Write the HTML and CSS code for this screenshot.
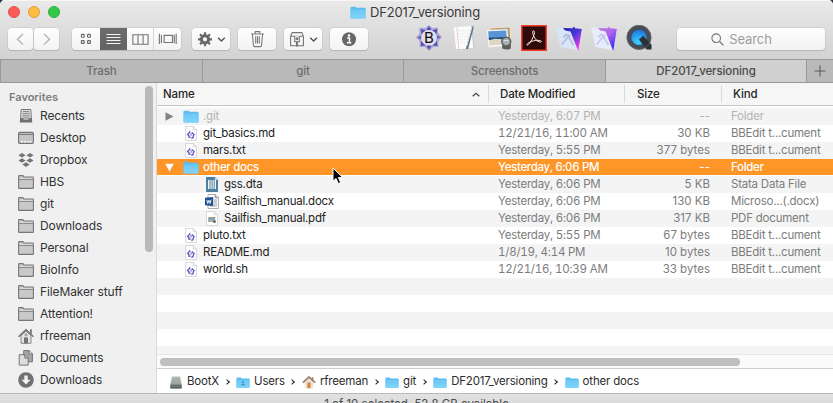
FILE: index.html
```html
<!DOCTYPE html>
<html lang="en">
<head>
<meta charset="utf-8">
<title>DF2017_versioning</title>
<link rel="stylesheet" href="styles.css">
</head>
<body>
<svg class="defs" aria-hidden="true">
  <defs>
    <linearGradient id="fold" x1="0" y1="0" x2="0" y2="1"><stop offset="0" stop-color="#6cc8f4"/><stop offset="1" stop-color="#7fd3fa"/></linearGradient>
    <linearGradient id="fm" x1="0" y1="0" x2=".7" y2="1"><stop offset="0" stop-color="#1b1f9c"/><stop offset=".5" stop-color="#4a38d8"/><stop offset="1" stop-color="#ff35f0"/></linearGradient>
    <linearGradient id="fm2" x1="0" y1="0" x2=".6" y2="1"><stop offset="0" stop-color="#c583dc"/><stop offset=".5" stop-color="#ad60ef"/><stop offset="1" stop-color="#3926ff"/></linearGradient>
    <radialGradient id="qt" cx=".45" cy=".75" r=".75"><stop offset="0" stop-color="#3fd0ff"/><stop offset="1" stop-color="#1364d8"/></radialGradient>
    <linearGradient id="drv" x1="0" y1="0" x2="0" y2="1"><stop offset="0" stop-color="#b5bbb9"/><stop offset="1" stop-color="#8b9391"/></linearGradient>
    <symbol id="folder" viewBox="0 0 16 13"><path d="M.5 1.6Q.5.7 1.4.7h4.1l1.1 1.1h8q.9 0 .9.9v8.8q0 .9-.9.9H1.4q-.9 0-.9-.9z" fill="#5bbdf0"/><path d="M.5 3.5h15v8q0 .9-.9.9H1.4q-.9 0-.9-.9z" fill="url(#fold)"/></symbol>
    <symbol id="users" viewBox="0 0 16 13"><use href="#folder"/><circle cx="8" cy="6.2" r="1.3" fill="#3d9cd0"/><path d="M5.3 10q.4-2 2.7-2t2.7 2z" fill="#3d9cd0"/></symbol>
    <symbol id="sfolder" viewBox="0 0 16 14"><path d="M.6 12.7V1.5q0-.9.9-.9h3.1q.6 0 .9.8l.3.7h8.8q.8 0 .8.8v9.8q0 .7-.7.7H1.3q-.7 0-.7-.7z" fill="#c9c9c9" stroke="#767676" stroke-width="1.1"/><path d="M1 4.5h14" stroke="#858585" stroke-width=".9"/><path d="M1.2 3.2h13.6" stroke="#e2e2e2" stroke-width=".8"/></symbol>
    <symbol id="bbfile" viewBox="0 0 12 15"><path d="M.5.5h7.8l3.2 3.2v10.8H.5z" fill="#fdfdff" stroke="#cfcfd6" stroke-width=".8"/><path d="M8.3.5v3.2h3.2" fill="#eee" stroke="#c8c8d0" stroke-width=".6"/><path d="M5 5.2 4 6.9 2.6 8.4l1.2 1 .3 1.9 1.5-.2m1.2-4.6 1 1.1 1.3.9-.8 1.5-.3 1.7-1.7.6" fill="none" stroke="#5a50bb" stroke-width="1.25"/><path d="M5.3 7v3M5 7h1.3L7 7.8l-1 .6 1 .7-.7 1" fill="none" stroke="#8d88c8" stroke-width=".6"/></symbol>
    <symbol id="dta" viewBox="0 0 12 15"><path d="M0 0h9l3 3v12H0z" fill="#4e7ea0"/><path d="M8.8 0v3.1H12z" fill="#bdd4e3"/><path d="M2 3h8v9H2z" fill="#eaf3f7"/><path d="M4 3v9M6.1 3v9M8.2 3v9" stroke="#4d7897" stroke-width=".9"/></symbol>
    <symbol id="docx" viewBox="0 0 14 15"><path d="M3 .5h7.4l3 3v11H3z" fill="#fff" stroke="#999" stroke-width=".8"/><path d="M10.2.5v3.2h3.2" fill="#ddd" stroke="#777" stroke-width=".8"/><path d="M9 6h3M9 8h3M9 10h3M5 12h7" stroke="#777" stroke-width=".7"/><path d="M0 3.8 8.2 3v9L0 11.2z" fill="#204f91"/><path d="m1.8 5.8.9 3.7 1.2-3.3 1.2 3.3 1-3.8" fill="none" stroke="#fff" stroke-width=".9"/></symbol>
    <symbol id="pdf" viewBox="0 0 12 15"><path d="M.5.5h7.8l3.2 3.2v10.8H.5z" fill="#fff" stroke="#cfcfcf" stroke-width=".8"/><path d="M8.3.5v3.2h3.2" fill="#eee" stroke="#ccc" stroke-width=".6"/><path d="M2.2 6h6.9v4.7H2.2z" fill="#7aa3cc"/><path d="M2.2 8.8h6.9v2.2H2.2z" fill="#b4aa95"/><path d="M3 6h6.5v1H3z" fill="#b79561"/><circle cx="8.5" cy="10.7" r="1.4" fill="#576273"/></symbol>
    <symbol id="drive" viewBox="0 0 14 14"><path d="M2.6.6h8.8L13 9v4.4H1V9z" fill="url(#drv)"/><path d="M1 9.4h12v4H1z" fill="#58605e"/><path d="M2 11h10" stroke="#82918b" stroke-width="1"/><path d="M4 3q3-1 6 0v2.5H4z" fill="#a5adaa"/></symbol>
    <symbol id="homec" viewBox="0 0 14 14"><path d="M2.5 6v7.2h9V6L7 2z" fill="#e7e3dc"/><path d="M5.3 7h3.3v6.2H5.3z" fill="#dc8432"/><path d="M.4 7.2 7 1l6.6 6.2" fill="none" stroke="#9b7c61" stroke-width="1.7"/><path d="M10 1.4h1.6v3H10z" fill="#98765c"/></symbol>
  </defs>
</svg>

<div class="window">
  <header class="titlebar">
    <div class="title-row">
      <div class="lights"><i class="red"></i><i class="yellow"></i><i class="green"></i></div>
      <div class="title"><svg class="t-icon"><use href="#folder"/></svg><span>DF2017_versioning</span></div>
    </div>
    <div class="toolbar">
      <div class="nav">
        <button class="btn"><svg width="25" height="22" viewBox="0 0 25 22"><path d="M15 6l-5.5 5.2L15 16.6" class="chev-nav"/></svg></button>
        <button class="btn"><svg width="25" height="22" viewBox="0 0 25 22"><path d="M10 6l5.5 5.2L10 16.6" class="chev-nav"/></svg></button>
      </div>
      <div class="views btn">
        <span class="seg"><svg width="12" height="12" viewBox="0 0 12 12"><g fill="none" stroke="#686868" stroke-width="1.1"><rect x="1.4" y="1.4" width="2.8" height="2.8" rx=".5"/><rect x="7.6" y="1.4" width="2.8" height="2.8" rx=".5"/><rect x="1.4" y="7.6" width="2.8" height="2.8" rx=".5"/><rect x="7.6" y="7.6" width="2.8" height="2.8" rx=".5"/></g></svg></span>
        <span class="seg on"><svg width="15" height="12" viewBox="0 0 15 12"><path d="M.5 1.5h14M.5 4.5h14M.5 7.5h14M.5 10.5h14" stroke="#f2f2f2" stroke-width="1"/></svg></span>
        <span class="seg"><svg width="17" height="11" viewBox="0 0 17 11"><path d="M.9.8h15.2v9.4H.9zM6 .8v9.4M11.1.8v9.4" fill="none" stroke="#747474" stroke-width="1.1"/></svg></span>
        <span class="seg last"><svg width="20" height="12" viewBox="0 0 20 12"><path d="M5.7 2.4h8.4v7.1H5.7zM1 .8v10.3M17.8.8v10.3M3 1.7v8.5M15.9 1.7v8.5" transform="translate(.4 0)" fill="none" stroke="#747474" stroke-width="1.1"/></svg></span>
      </div>
      <div class="actions">
        <button class="btn wide"><svg width="38" height="22" viewBox="0 0 38 22"><circle cx="13" cy="11.3" r="3.6" fill="none" stroke="#686868" stroke-width="3"/><g stroke="#686868" stroke-width="2.2"><path d="M13 4.3v3M13 15.3v3M6 11.3h3M17 11.3h3M8 6.3l2.2 2.2M15.8 14.1l2.2 2.2M8 16.3l2.2-2.2M15.8 8.5 18 6.3"/></g><path d="m26 9.8 3.4 3.2 3.4-3.2" class="chev"/></svg></button>
        <button class="btn wide"><svg width="38" height="22" viewBox="0 0 38 22"><g fill="none" stroke="#7b7b7b" stroke-width="1.1"><path d="M13 6h13M17.2 5.8V3.6h4.6v2.2M14.4 6.2l1.1 11.6q.1.8.9.8h6.2q.8 0 .9-.8l1.1-11.6M17.7 8.3v7.3M19.5 8.3v7.3M21.3 8.3v7.3"/></g></svg></button>
        <button class="btn wide"><svg width="38" height="22" viewBox="0 0 38 22"><g fill="none" stroke="#747474" stroke-width="1.1"><path d="M6.6 8.2h12.8M6.6 8.2v9.6h12.8V8.2M6.6 8.2 8.2 4.6h9.6l1.6 3.6"/><path d="M10.7 8.2v5.6h4.6V8.2" fill="#fafafa"/><circle cx="13" cy="10.8" r=".9"/><path d="M13 13.8v4.8" stroke-width="2"/></g><path d="m26.2 9.8 3.4 3.2L33 9.8" class="chev"/></svg></button>
        <button class="btn wide"><svg width="38" height="22" viewBox="0 0 38 22"><circle cx="19" cy="11.2" r="7" fill="#686868"/><circle cx="19" cy="7.6" r="1.25" fill="#fff"/><path d="M17.2 10h2.3v4.5M16.9 14.8h4.4" fill="none" stroke="#fff" stroke-width="1.5"/></svg></button>
      </div>
      <div class="apps">
        <svg viewBox="0 0 26 26"><path d="m13 0 3.2 3 5.6-.4.3 5.3L26 12l-3.6 4.4.2 5.4-5.4.2L13 26l-4-4-5.4-.1.1-5.6L0 12.5l3.6-4-.2-5.7 5.9.3z" fill="#aaa5d6"/><path d="m13 1 2.2 3.4-2.2 2-2.2-2zM4.6 4l5 1.2-4 4zM21.4 4l-5 1.2 4 4zM5 16l4.4 4.6-4.4.3zM21 16l-4.2 4.6 4.4.3zM10.8 21.5l2.2-2 2.2 2-2.2 3.3z" fill="#5850b0"/><path d="m1.2 12.4 4-2v4zM24.8 12.2l-4-2v4z" fill="#6a63b8"/><circle cx="13" cy="12.8" r="7.8" fill="#dfdeea"/><text x="13" y="18.2" class="b-mark">B</text></svg>
        <svg viewBox="0 0 26 26"><path d="M3 3 21.5 1.4l1.4 21.8-18 1.8z" fill="#bdbdbd"/><path d="M2.6 2.2 20.6 1l1.6 22-17.2 1.5z" fill="#fcfcfb"/><path d="M6 2.2 7.8 24" stroke="#efa69f" stroke-width=".6"/><path d="m4 6 16-1M4.5 9l16-1M4.7 12l15-1M5 15l14-1M5 18l13-1" stroke="#dde3e7" stroke-width=".5"/><path d="M21.8 1.5 16 24" stroke="#5e6f7e" stroke-width="2.2"/><path d="m21 2-5.2 19" stroke="#d7e5ed" stroke-width="1"/></svg>
        <svg viewBox="0 0 26 26"><path d="m4 3 20-1 1 17-20 1z" fill="#b89867" stroke="#eee5d2"/><path d="m.5 5 21-1 1.3 17-20.5 1.5z" fill="#fbfbfb" stroke="#c7c7c7" stroke-width=".4"/><path d="m2.2 6.3 18-.8.5 7.5-18 .7z" fill="#5b94d6"/><path d="m2.7 12.7 18-.6.3 3-18 .5z" fill="#1e4e80"/><path d="m2.9 15.3 6-1.6 12 .7.3 5-17.8 1z" fill="#ded7c4"/><path d="M16.2 18h8.6v5.6q-4 2-8.6 0z" fill="#5b5b58"/><circle cx="20.3" cy="16.6" r="4.4" fill="#a5afb4" stroke="#5c5c59" stroke-width="1.5"/><path d="M17.5 15.6h5" stroke="#dce3e5"/></svg>
        <svg viewBox="0 0 26 26"><path d="M.8.8h24.4v24.4H.8z" fill="#300909" stroke="#f13a27" stroke-width="1.4"/><path d="M6 19.6c1-2.6 7.8-4.9 12.6-4.1 3.6.7 1.2 2.6-1.8.7-3.1-2-5.8-7.8-5-9.8.7-1.5 2.2 0 1.4 2.8-1 3.4-2.8 6.9-5.1 9.6-1.1 1.3-2.3 1.7-2.1.8z" fill="none" stroke="#f6f0ee" stroke-width="1"/></svg>
        <svg viewBox="0 0 26 26"><path d="m7 3 9.5.2 1.5-1.6 1 1.6 6.8.8-3.6 22z" fill="url(#fm)"/><path d="M0 2.8h6.5l2.6 2.8 5.4.8L22 25.6 4.4 21.8z" fill="#d9e6f5"/><path d="m5.6 19.5 7.3-8.5M11.8 10.5l5.6 9.5M7.3 12.2l3-2.7 4 1.5" fill="none" stroke="#b0bfe2" stroke-width="1.9"/></svg>
        <svg viewBox="0 0 26 26"><path d="m7 3 9.5.2 1.5-1.6 1 1.6 6.8.8-3.6 22z" fill="url(#fm2)"/><path d="M0 2.8h6.5l2.6 2.8 5.4.8L22 25.6 4.4 21.8z" fill="#e6edfa"/><path d="m5.6 19.5 7.3-8.5M11.8 10.5l5.6 9.5M7.3 12.2l3-2.7 4 1.5" fill="none" stroke="#c8c8ed" stroke-width="1.9"/></svg>
        <svg viewBox="0 0 26 26"><circle cx="13" cy="12.4" r="10" fill="url(#qt)" stroke="#474d56" stroke-width="4.6"/><path d="m13 14.4 4.2-3.6 8.3 9v4.6h-5z" fill="#2c3139"/><circle cx="13" cy="12.4" r="12.1" fill="none" stroke="#6d747e" stroke-width=".6"/></svg>
      </div>
      <div class="search btn"><svg width="13" height="13" viewBox="0 0 13 13"><circle cx="5.2" cy="5.2" r="4.3" fill="none" stroke="#747474" stroke-width="1.1"/><path d="m8.3 8.3 4.1 4.1" stroke="#747474" stroke-width="1.3"/></svg><span>Search</span></div>
    </div>
  </header>

  <nav class="tabs">
    <span class="tab">Trash</span><span class="tab">git</span><span class="tab">Screenshots</span><span class="tab current">DF2017_versioning</span>
    <span class="add"><svg width="12" height="12" viewBox="0 0 12 12"><path d="M6 .5v11M.5 6h11" stroke="#5c5c5c" stroke-width="1.1"/></svg></span>
  </nav>

  <div class="main">
    <aside class="sidebar">
      <div class="places">
        <h2>Favorites</h2>
        <a><svg viewBox="0 0 16 14"><path d="M3.2.5h9.6l.6 9.5H2.6z" fill="#e6e6e6" stroke="#777"/><path d="M4.7 2.4h6.6M4.5 4.3h7M4.3 6.2h7.4M4.2 8.1h7.6" stroke="#777" stroke-width=".9"/><path d="m2.2 9 3 .5.7 1.5h4.2l.8-1.5 2.9-.5.5 4.5H1.7z" fill="#707070"/></svg>Recents</a>
        <a><svg viewBox="0 0 16 14"><rect x=".6" y="1.4" width="14.8" height="11" rx="1.2" fill="#c5c5c5" stroke="#747474" stroke-width="1.1"/><path d="M1 3.4h14" stroke="#777"/><path d="M3 10.8h2M6 10.8h2M9 10.8h1.5M11.5 10.8h2" stroke="#f7f7f7" stroke-width="1.6"/></svg>Desktop</a>
        <a><svg viewBox="0 0 16 14"><path d="m4 0 3.6 2.2L4 4.5.4 2.2zM12 0l3.6 2.2L12 4.5 8.4 2.2zM4 5.3l3.6 2.3L4 9.8.4 7.6zM12 5.3l3.6 2.3L12 9.8 8.4 7.6zM8 9.2l3.6 2.2L8 14l-3.6-2.6z" fill="#747474"/></svg>Dropbox</a>
        <a><svg><use href="#sfolder"/></svg>HBS</a>
        <a><svg><use href="#sfolder"/></svg>git</a>
        <a><svg><use href="#sfolder"/></svg>Downloads</a>
        <a><svg><use href="#sfolder"/></svg>Personal</a>
        <a><svg><use href="#sfolder"/></svg>BioInfo</a>
        <a><svg><use href="#sfolder"/></svg>FileMaker stuff</a>
        <a><svg><use href="#sfolder"/></svg>Attention!</a>
        <a><svg class="tall" viewBox="0 0 16 16"><path d="M3 7.5v7.8h10V7.5L8 3z" fill="#e5e5e5" stroke="#808080" stroke-width=".9"/><path d="M.5 8.8 8 1.7l7.5 7.1" fill="none" stroke="#707070" stroke-width="1.5"/><path d="M12 1.3h1.8v5L12 4.6z" fill="#747474"/><path d="M6 9.5h4v5.8H6z" fill="#747474"/><circle cx="8" cy="6.8" r="1.2" fill="none" stroke="#777" stroke-width=".7"/></svg>rfreeman</a>
        <a><svg class="tall" viewBox="0 0 16 16"><path d="M5.7.6h5.5l3.2 3.2v8H5.7z" fill="#a5a5a5" stroke="#747474"/><path d="M11 .6V4h3.4" fill="#ddd" stroke="#747474"/><path d="M1.2 4.7H7l3.2 3.2v7.2h-9z" fill="#ddd" stroke="#747474"/><path d="M6.8 4.7v3.4h3.4" fill="#bbb" stroke="#747474"/></svg>Documents</a>
        <a><svg class="tall" viewBox="0 0 16 16"><circle cx="8" cy="8" r="7.8" fill="#717171"/><path d="M6.3 3.5h3.4v4.2h2.8L8 12.5 3.5 7.7h2.8z" fill="#f3f3f3"/></svg>Downloads</a>
      </div>
      <div class="side-track"><div class="side-thumb"></div></div>
    </aside>

    <section class="content">
      <div class="head">
        <span class="h-name">Name<svg width="8" height="5" viewBox="0 0 8 5"><path d="m.7 4.3 3.3-3 3.3 3" fill="none" stroke="#444" stroke-width="1.2"/></svg></span><span>Date Modified</span><span class="h-size">Size</span><span>Kind</span>
      </div>
      <div class="rows">
        <div class="row dim"><span class="name"><i class="tri"><svg viewBox="0 0 9 9"><path d="M.5.3v8.4L8.5 4.5z" fill="#828282"/></svg></i><svg class="ic"><use href="#folder"/></svg>.git</span><span class="date">Yesterday, 6:07 PM</span><span class="size">--</span><span>Folder</span></div>
        <div class="row"><span class="name"><i class="tri"></i><svg class="ic"><use href="#bbfile"/></svg>git_basics.md</span><span class="date">12/21/16, 11:00 AM</span><span class="size">30 KB</span><span>BBEdit t...cument</span></div>
        <div class="row"><span class="name"><i class="tri"></i><svg class="ic"><use href="#bbfile"/></svg>mars.txt</span><span class="date">Yesterday, 5:55 PM</span><span class="size">377 bytes</span><span>BBEdit t...cument</span></div>
        <div class="row selected"><span class="name"><i class="tri"><svg viewBox="0 0 9 9"><path d="M.2.7h8.6L4.5 8.5z" fill="#fff"/></svg></i><svg class="ic"><use href="#folder"/></svg>other docs</span><span class="date">Yesterday, 6:06 PM</span><span class="size">--</span><span>Folder</span>
          <svg class="cursor" viewBox="0 0 12 18"><path d="M1 1v13.2l3-2.8 2.3 5.2 2.3-1-2.2-5h4.3z" fill="#000" stroke="#fff" stroke-width="1"/></svg></div>
        <div class="row"><span class="name child"><i class="tri"></i><svg class="ic"><use href="#dta"/></svg>gss.dta</span><span class="date">Yesterday, 6:06 PM</span><span class="size">5 KB</span><span>Stata Data File</span></div>
        <div class="row"><span class="name child"><i class="tri"></i><svg class="ic"><use href="#docx"/></svg>Sailfish_manual.docx</span><span class="date">Yesterday, 6:06 PM</span><span class="size">130 KB</span><span>Microso...(.docx)</span></div>
        <div class="row"><span class="name child"><i class="tri"></i><svg class="ic"><use href="#pdf"/></svg>Sailfish_manual.pdf</span><span class="date">Yesterday, 6:06 PM</span><span class="size">317 KB</span><span>PDF document</span></div>
        <div class="row"><span class="name"><i class="tri"></i><svg class="ic"><use href="#bbfile"/></svg>pluto.txt</span><span class="date">Yesterday, 5:55 PM</span><span class="size">67 bytes</span><span>BBEdit t...cument</span></div>
        <div class="row"><span class="name"><i class="tri"></i><svg class="ic"><use href="#bbfile"/></svg>README.md</span><span class="date">1/8/19, 4:14 PM</span><span class="size">10 bytes</span><span>BBEdit t...cument</span></div>
        <div class="row"><span class="name"><i class="tri"></i><svg class="ic"><use href="#bbfile"/></svg>world.sh</span><span class="date">12/21/16, 10:39 AM</span><span class="size">33 bytes</span><span>BBEdit t...cument</span></div>
        <div class="row"></div><div class="row"></div><div class="row"></div><div class="row"></div><div class="row"></div>
      </div>
      <div class="h-track"><div class="h-thumb"></div></div>
      <div class="path">
        <span class="crumb"><svg><use href="#drive"/></svg>BootX</span><b class="sep"></b>
        <span class="crumb"><svg><use href="#users"/></svg>Users</span><b class="sep"></b>
        <span class="crumb"><svg><use href="#homec"/></svg>rfreeman</span><b class="sep"></b>
        <span class="crumb"><svg><use href="#folder"/></svg>git</span><b class="sep"></b>
        <span class="crumb"><svg><use href="#folder"/></svg>DF2017_versioning</span><b class="sep"></b>
        <span class="crumb"><svg><use href="#folder"/></svg>other docs</span>
      </div>
    </section>
  </div>
  <footer class="status">1 of 10 selected, 52.8 GB available</footer>
</div>
</body>
</html>
```
FILE: styles.css
```css
* { box-sizing: border-box; }
body { margin: 0; background: #2b2b33; font: 12px/1 Inter, "Liberation Sans", sans-serif; color: #262626; overflow: hidden; }
svg { display: block; flex: none; }
.defs { position: absolute; width: 0; height: 0; }
.window { width: 833px; height: 403px; display: flex; flex-direction: column; overflow: hidden; border-radius: 5px 5px 0 0; background: #f5f5f5; }

.titlebar { height: 59px; flex: none; background: linear-gradient(#e9e9e9, #d2d2d2); box-shadow: inset 0 1px #f6f6f6; }
.title-row { height: 24px; display: grid; grid-template-columns: 72px 1fr 75px; align-items: center; }
.lights { display: flex; gap: 8px; padding-left: 8px; }
.lights i { width: 12px; height: 12px; border-radius: 50%; border: 1px solid #e3504b; background: #fc5b57; }
.lights .yellow { background: #fdbc40; border-color: #e0a03a; }
.lights .green { background: #34c84a; border-color: #2aae3b; }
.title { display: flex; justify-content: center; align-items: center; gap: 4px; font-size: 13px; letter-spacing: -.15px; color: #3a3a3a; }
.t-icon { width: 16px; height: 13px; }

.toolbar { display: flex; height: 35px; padding: 4px 8px 0; align-items: flex-start; }
.btn { height: 22px; padding: 0; border: 0; border-radius: 4px; background: linear-gradient(#fefefe, #f3f3f3); box-shadow: 0 0 0 .5px #c4c4c4, 0 1px 1px #a9a9a9; }
.nav { display: flex; gap: 1px; width: 64px; }
.nav .btn { width: 25px; }
.chev-nav { fill: none; stroke: #b4b4b4; stroke-width: 1.4; }
.chev { fill: none; stroke: #555; stroke-width: 1.5; }
.views { width: 109px; display: flex; overflow: hidden; }
.seg { width: 28px; display: flex; align-items: center; justify-content: center; }
.seg.on { width: 27px; background: linear-gradient(#6c6c6c, #636363); }
.seg:nth-child(3) { width: 27px; border-right: 1px solid #d6d6d6; }
.seg.last { width: 27px; }
.actions { display: flex; gap: 8px; margin-left: 11px; }
.wide { width: 38px; }
.apps { display: flex; gap: 9px; margin: -3px 0 0 48px; }
.apps svg { width: 26px; height: 26px; }
.b-mark { font: 400 15px Inter, "Liberation Sans", sans-serif; text-anchor: middle; fill: #0b0b0b; }
.search { width: 148px; margin-left: auto; display: flex; align-items: center; justify-content: center; gap: 5px; color: #9d9d9d; font-size: 13px; letter-spacing: -.1px; padding: 1px 19px 0 0; }

.tabs { height: 24px; flex: none; display: flex; border-top: 1px solid #9a9a9a; border-bottom: 1px solid #979797; background: #b9b9b9; }
.tab { flex: none; width: 201px; border-right: 1px solid #999; display: flex; align-items: center; justify-content: center; padding-top: 2px; font-size: 11.5px; letter-spacing: -.1px; font-weight: 500; color: #6c6c6c; }
.tab:first-child { border-left: 1px solid #999; width: 203px; }
.tab:nth-child(3) { width: 202px; }
.tab.current { background: #d0d0d0; color: #4a4a4a; }
.add { flex: 1; display: flex; align-items: center; justify-content: center; }

.main { flex: none; height: 310px; display: grid; grid-template-columns: 157px 1fr; }
.sidebar { display: flex; height: 310px; overflow: hidden; background: #f0f0f0; border-right: 1px solid #dadada; }
.places { flex: 1; padding-top: 8px; }
.places h2 { margin: 0; height: 14px; line-height: 13px; padding-left: 9px; font-size: 11px; font-weight: 600; color: #7c7c7c; }
.places a { display: flex; align-items: center; height: 22px; padding-left: 18px; font-size: 12px; letter-spacing: -.12px; color: #333; }
.places svg { width: 16px; height: 14px; margin-right: 6px; }
.places .tall { height: 16px; }
.side-track { width: 11px; padding-top: 3px; }
.side-thumb { width: 8px; height: 166px; border-radius: 4px; background: #b9b9b9; }

.content { display: flex; flex-direction: column; min-width: 0; background: #fff; }
.head { height: 23px; flex: none; display: grid; grid-template-columns: 331px 136px 97px 1fr; align-items: center; border-bottom: 1px solid #c9c9c9; background: #f6f6f6; font-size: 11.5px; letter-spacing: -.15px; font-weight: 500; color: #262626; }
.head span { height: 18px; line-height: 19px; padding-left: 11px; border-left: 1px solid #d9d9d9; }
.head .h-size { padding-left: 12px; }
.head .h-name { display: flex; align-items: center; justify-content: space-between; padding: 0 8px 0 6px; border: 0; }
.rows { flex: none; height: 248px; overflow: hidden; padding-top: 2px; }
.row { position: relative; display: grid; grid-template-columns: 341px 144px 68px 1fr; height: 17px; line-height: 17px; font-size: 11.5px; letter-spacing: -.22px; color: #7c7c7c; white-space: nowrap; }
.row:nth-child(odd) { background: #f4f4f4; }
.row.selected { background: #fd9527; background-clip: content-box; padding-bottom: 1px; color: #fff; font-weight: 500; letter-spacing: -.3px; }
.name { display: flex; align-items: center; height: 17px; padding-left: 8px; color: #222; }
.child { padding-left: 29px; }
.selected .name { color: #fff; }
.dim, .dim .name { color: #b3b3b3; }
.tri { width: 9px; height: 9px; margin-right: 9px; }
.tri svg { width: 9px; height: 9px; }
.ic { width: 16px; height: 15px; margin-right: 4px; }
.date { font-variant-numeric: tabular-nums; letter-spacing: -.22px; }
.selected .date { letter-spacing: -.34px; }
.size { text-align: right; letter-spacing: 0; }
.row > span:last-of-type { padding-left: 21px; }
.cursor { position: absolute; left: 175px; top: 8px; width: 12px; height: 18px; z-index: 2; }
.h-track { flex: none; height: 15px; border-top: 1px solid #e7e7e7; border-bottom: 1px solid #cdcdcd; padding: 3px 0 0 3px; background: #fafafa; }
.h-thumb { width: 580px; height: 8px; border-radius: 4px; background: #bfbfbf; }
.path { flex: 1; display: flex; align-items: center; padding: 2px 0 0 12px; font-size: 11.5px; letter-spacing: -.18px; color: #2c2c2c; }
.crumb { display: flex; align-items: center; gap: 4px; }
.crumb svg { width: 14px; height: 13px; }
.sep { width: 4px; height: 4px; border: solid #222; border-width: 1.5px 1.5px 0 0; transform: rotate(45deg); margin: 0 7.5px 0 5.5px; }
.status { flex: none; height: 14px; border-top: 1px solid #b9b9b9; background: linear-gradient(#e2e2e2, #d8d8d8); text-align: center; font-size: 11.5px; line-height: 21px; color: #4a4a4a; }
```
